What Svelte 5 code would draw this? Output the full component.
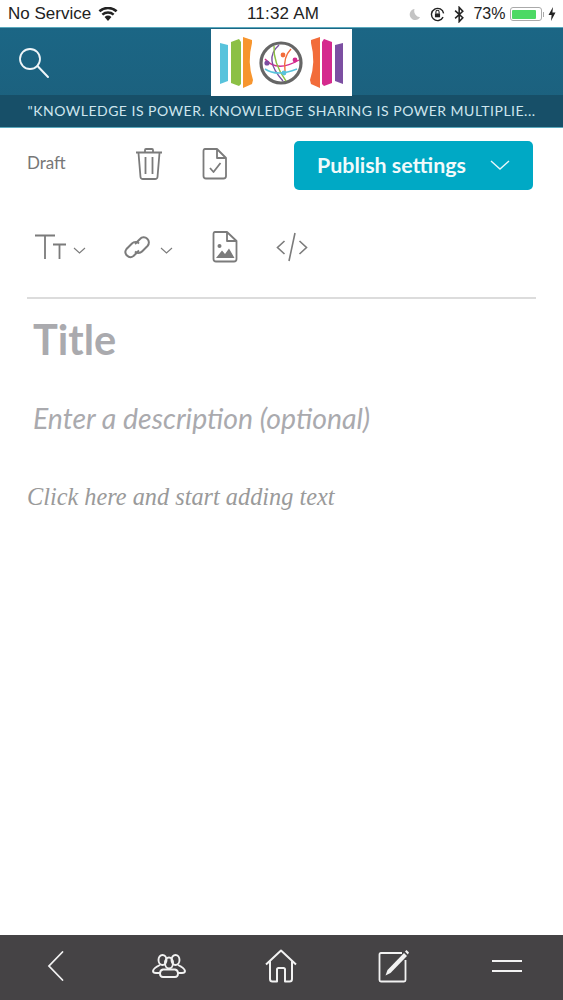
<script>
  const quote = '"KNOWLEDGE IS POWER. KNOWLEDGE SHARING IS POWER MULTIPLIE...';
</script>

<div class="page">
  <div class="status">
    <div class="st-left">
      <span>No Service</span>
      <svg width="20" height="14" viewBox="0 0 18 13"><path d="M9 13 L5.8 9.3 A5 5 0 0 1 12.2 9.3 Z M4.5 7.9 L3 6.2 A9 9 0 0 1 15 6.2 L13.5 7.9 A7 7 0 0 0 4.5 7.9 Z M1.8 4.8 L0.2 3 A13.5 13.5 0 0 1 17.8 3 L16.2 4.8 A11 11 0 0 0 1.8 4.8 Z" fill="#222"/></svg>
    </div>
    <div class="st-time">11:32 AM</div>
    <div class="st-right">
      <svg width="13" height="15" viewBox="0 0 14 14"><path d="M7 1 A6 6 0 1 0 13 10 A7 7 0 0 1 7 1 Z" fill="#c4c4c4"/></svg>
      <svg class="gap-l" width="15" height="15" viewBox="0 0 14 14"><path d="M12.2 9.5 A5.7 5.7 0 1 1 12.7 6" fill="none" stroke="#222" stroke-width="1.3"/><rect x="4.6" y="6" width="4.8" height="3.6" fill="#222"/><path d="M5.5 6 V4.6 A1.5 1.5 0 0 1 8.5 4.6 V6" fill="none" stroke="#222"/></svg>
      <svg class="gap-l" width="11" height="17" viewBox="0 0 10 15"><path d="M1 4 L8 10.5 L4.7 14 V1 L8 4.5 L1 11" fill="none" stroke="#222" stroke-width="1.4"/></svg>
      <span class="pct">73%</span>
      <div class="battery"><div class="fill" style="width: 90%"></div></div>
      <div class="nub"></div>
      <svg class="bolt" width="8" height="14" viewBox="0 0 8 14"><path d="M5 0 L0.5 8 H3.6 L3 14 L7.5 5.6 H4.4 Z" fill="#222"/></svg>
    </div>
  </div>

  <header>
    <div class="top">
      <svg class="search" width="34" height="34" viewBox="0 0 34 34"><circle cx="13" cy="13" r="10" fill="none" stroke="#eef5f8" stroke-width="1.8"/><path d="M20.5 20 L31 31" stroke="#eef5f8" stroke-width="2" stroke-linecap="round"/></svg>
      <div class="logo">
        <svg width="141" height="66" viewBox="0 0 141 66">
          <path d="M9 14 L17 16 V52 L9 55 Z" fill="#58c3dc"/>
          <path d="M20 13 L28 10 L30 13 V55 L28 57 L20 54 Z" fill="#8cc045"/>
          <path d="M32 8 L41 11 L41 14 Q36 33 42 51 L41 55 L32 59 Z" fill="#f7952e"/>
          <circle cx="70" cy="34" r="20" fill="none" stroke="#666" stroke-width="3.2"/>
          <path d="M54 30 Q66 44 88 31" fill="none" stroke="#d52a8e" stroke-width="1.4"/>
          <path d="M68 16 Q52 30 72 52" fill="none" stroke="#7a4fa0" stroke-width="1.4"/>
          <path d="M63 17 Q62 34 75 52" fill="none" stroke="#8cc045" stroke-width="1.4"/>
          <path d="M80 20 Q72 28 74 42" fill="none" stroke="#f26c3a" stroke-width="1.4"/>
          <path d="M54 40 Q66 48 86 40" fill="none" stroke="#58c3dc" stroke-width="1.6"/>
          <circle cx="72" cy="26" r="2.4" fill="#f26c3a"/>
          <circle cx="84" cy="31" r="2.4" fill="#d52a8e"/>
          <circle cx="56" cy="34" r="2.6" fill="#7a4fa0"/>
          <circle cx="73" cy="44" r="2.4" fill="#58c3dc"/>
          <path d="M109 8 L100 11 L100 14 Q105 33 99 51 L100 55 L109 59 Z" fill="#f26c3a"/>
          <path d="M121 13 L113 10 L111 13 V55 L113 57 L121 54 Z" fill="#d52a8e"/>
          <path d="M132 14 L124 16 V52 L132 55 Z" fill="#7c4fa2"/>
        </svg>
      </div>
    </div>
    <div class="quote">{quote}</div>
  </header>

  <main>
    <div class="actions">
      <span class="draft">Draft</span>
      <svg class="trash" width="28" height="34" viewBox="0 0 28 34" fill="none" stroke="#7b7b7b" stroke-width="1.8">
        <path d="M1 5.5 H27 M10 5 V3 Q10 2 11 2 H17 Q18 2 18 3 V5 M3.5 6 L5.5 30 Q5.7 32 8 32 H20 Q22.3 32 22.5 30 L24.5 6 M10.5 10 V27 M17.5 10 V27"/>
      </svg>
      <svg class="check" width="26" height="32" viewBox="0 0 26 32" fill="none" stroke="#7b7b7b" stroke-width="1.8" stroke-linejoin="round">
        <path d="M3 1 H15 L24 10 V28 Q24 30.5 21.5 30.5 H4 Q1.5 30.5 1.5 28 V3 Q1.5 1 3 1 Z M15 1 V10 H24 M8 20 L11.5 24 L18.5 15"/>
      </svg>
      <button class="publish">
        <span>Publish settings</span>
        <svg width="20" height="10" viewBox="0 0 20 10"><path d="M1 1 L10 9 L19 1" fill="none" stroke="#e8f7fa" stroke-width="1.4"/></svg>
      </button>
    </div>

    <div class="tools">
      <div class="tool tt">
        <svg width="32" height="26" viewBox="0 0 32 26" fill="none" stroke="#7b7b7b" stroke-width="1.8">
          <path d="M0 1.5 H20 M10 1.5 V25 M18 10.5 H31 M24.5 10.5 V25"/>
        </svg>
        <svg class="caret" width="13" height="7" viewBox="0 0 13 7"><path d="M1 1 L6.5 6 L12 1" fill="none" stroke="#7b7b7b" stroke-width="1.1"/></svg>
      </div>
      <div class="tool lk">
        <svg width="28" height="27" viewBox="0 0 28 27" fill="none" stroke="#7b7b7b" stroke-width="2">
          <path d="M12 10 L17 5 A5 5 0 0 1 24.5 12 L19 17.5 A5 5 0 0 1 12 17.5"/>
          <path d="M16 16.5 L10.5 22 A5 5 0 0 1 3.5 15 L9 9.5 A5 5 0 0 1 16 9.5"/>
        </svg>
        <svg class="caret" width="13" height="7" viewBox="0 0 13 7"><path d="M1 1 L6.5 6 L12 1" fill="none" stroke="#7b7b7b" stroke-width="1.1"/></svg>
      </div>
      <svg class="img" width="26" height="32" viewBox="0 0 26 32" fill="none" stroke="#7b7b7b" stroke-width="1.8" stroke-linejoin="round">
        <path d="M3 1 H15 L24.5 10 V28 Q24.5 30.5 22 30.5 H4 Q1.5 30.5 1.5 28 V3 Q1.5 1 3 1 Z M15 1 V10 H24.5"/>
        <circle cx="7.5" cy="15" r="2" fill="#7b7b7b" stroke="none"/>
        <path d="M4 27 L10 19.5 L13 23 L17 17.5 L22.5 27 Z" fill="#7b7b7b" stroke="none"/>
      </svg>
      <svg class="code" width="32" height="30" viewBox="0 0 32 30" fill="none" stroke="#7b7b7b" stroke-width="1.6">
        <path d="M8.5 9 L1.5 15.5 L8.5 22 M23.5 9 L30.5 15.5 L23.5 22 M19 1 L13 29"/>
      </svg>
    </div>

    <div class="rule"></div>

    <div class="title">Title</div>
    <div class="desc">Enter a description (optional)</div>
    <div class="body-text">Click here and start adding text</div>
  </main>

  <nav>
    <svg width="18" height="32" viewBox="0 0 18 32"><path d="M15.5 2 L2 16 L15.5 30" fill="none" stroke="#f2f2f2" stroke-width="1.8" stroke-linecap="round"/></svg>
    <svg width="34" height="26" viewBox="0 0 34 26" fill="none" stroke="#f2f2f2" stroke-width="1.9">
      <ellipse cx="10.5" cy="7" rx="4" ry="5"/>
      <ellipse cx="23.5" cy="7" rx="4" ry="5"/>
      <ellipse cx="17" cy="10" rx="4" ry="5.5"/>
      <path d="M8 12 Q1.5 15 1 18 Q1 20 4 20 H8 M26 12 Q32.5 15 33 18 Q33 20 30 20 H26"/>
      <path d="M11 16.5 Q8 17 8 20.5 Q8 24 11 24 H23 Q26 24 26 20.5 Q26 17 23 16.5 Z"/>
    </svg>
    <svg width="32" height="34" viewBox="0 0 32 34" fill="none" stroke="#f2f2f2" stroke-width="2" stroke-linejoin="round">
      <path d="M1 15.5 L16 1.5 L31 15.5 M5 12.5 V30 Q5 32.5 7.5 32.5 H12 V20.5 Q12 19 13.5 19 H18.5 Q20 19 20 20.5 V32.5 H24.5 Q27 32.5 27 30 V12.5"/>
    </svg>
    <svg width="32" height="34" viewBox="0 0 32 34" fill="none" stroke="#f2f2f2" stroke-width="1.8">
      <path d="M24 4 H3 Q1.5 4 1.5 5.5 V31 Q1.5 32.5 3 32.5 H26 Q27.5 32.5 27.5 31 V11"/>
      <path d="M7.5 26.5 L9.5 21 L26 4 L29 7 L12.5 24 Z" fill="#f2f2f2" stroke="none"/>
      <path d="M27 2.5 L28.5 1 L31 3.5 L29.8 5.5 Z" fill="#f2f2f2" stroke="none"/>
    </svg>
    <div class="burger"><i></i><i></i></div>
  </nav>
</div>

<style>
  :global(body) {
    margin: 0;
    background: #fff;
  }
  .page {
    display: flex;
    flex-direction: column;
    height: 1000px;
    width: 563px;
    overflow: hidden;
    font-family: "Lato", sans-serif;
  }
  .status {
    display: flex;
    align-items: center;
    justify-content: space-between;
    height: 27px;
    padding: 1px 7px 0 8px;
    box-sizing: border-box;
    flex: none;
    position: relative;
    font-family: "Liberation Sans", sans-serif;
    font-size: 17px;
    color: #222;
    background: #fff;
  }
  .st-left {
    display: flex;
    align-items: center;
    gap: 7px;
  }
  .st-time {
    position: absolute;
    left: 3px;
    right: 0;
    text-align: center;
    font-size: 17px;
    letter-spacing: 0.2px;
    pointer-events: none;
  }
  .st-right {
    display: flex;
    align-items: center;
  }
  .gap-l {
    margin-left: 9px;
  }
  .pct {
    margin-left: 8px;
    font-size: 16px;
  }
  .battery {
    width: 32px;
    height: 14px;
    margin-left: 4px;
    border: 1px solid #aaa;
    border-radius: 3px;
    padding: 1.5px;
    box-sizing: border-box;
  }
  .fill {
    height: 100%;
    background: #4cd964;
    border-radius: 1px;
  }
  .nub {
    width: 1.5px;
    height: 5px;
    margin-left: 1px;
    background: #aaa;
  }
  .bolt {
    margin-left: 4px;
  }

  header {
    flex: none;
    height: 101px;
    display: flex;
    flex-direction: column;
    border-top: 1px solid #5aa9bd;
    box-sizing: border-box;
    border-bottom: 1px solid #5aa9bd;
    background: linear-gradient(#1b6685, #1c5f7c);
  }
  .top {
    height: 67px;
    flex: none;
    position: relative;
    display: flex;
    align-items: flex-start;
    justify-content: center;
  }
  .search {
    position: absolute;
    left: 17px;
    top: 18px;
  }
  .logo {
    width: 141px;
    height: 67px;
    margin-top: 1px;
    background: #fff;
  }
  .logo svg {
    display: block;
  }
  .quote {
    flex: 1;
    display: flex;
    align-items: center;
    justify-content: center;
    background: #174f68;
    color: #cfe6ee;
    font-size: 14px;
    letter-spacing: 0.5px;
    white-space: nowrap;
    padding-bottom: 1px;
  }

  main {
    flex: 1;
    padding: 0 27px;
    min-height: 0;
  }
  .actions {
    display: flex;
    align-items: center;
    height: 75px;
  }
  .draft {
    width: 108px;
    font-size: 17px;
    color: #777;
    margin-top: -7px;
  }
  .trash {
    margin-top: -4px;
  }
  .check {
    margin-left: 39px;
    margin-top: -4px;
  }
  .publish {
    margin-left: 66px;
    width: 239px;
    height: 49px;
    border: none;
    border-radius: 5px;
    background: #00a9c5;
    color: #f1fafb;
    font-family: "Lato", sans-serif;
    font-size: 21.4px;
    font-weight: 700;
    display: flex;
    align-items: center;
    justify-content: space-between;
    padding: 0 23px 0 23px;
    margin-top: -1px;
  }
  .tools {
    display: flex;
    align-items: center;
    height: 94px;
    padding: 0 0 6px 8px;
    box-sizing: border-box;
  }
  .tool {
    display: flex;
    align-items: center;
  }
  .caret {
    margin-left: 6px;
    margin-top: 7px;
  }
  .lk {
    margin-left: 37px;
  }
  .lk .caret {
    margin-left: 9px;
  }
  .img {
    margin-left: 39px;
  }
  .code {
    margin-left: 38px;
  }
  .rule {
    height: 2px;
    width: 509px;
    background: #dcdcdc;
  }
  .title {
    margin: 15px 0 0 6px;
    font-size: 41.5px;
    line-height: 50px;
    font-weight: 700;
    color: #aaaaae;
  }
  .desc {
    margin: 38px 0 0 6px;
    font-size: 28.4px;
    line-height: 32px;
    font-style: italic;
    color: #aaaaae;
  }
  .body-text {
    margin-top: 48px;
    font-family: "Liberation Serif", serif;
    font-size: 24.3px;
    line-height: 30px;
    font-style: italic;
    color: #9a9a9a;
  }

  nav {
    flex: none;
    height: 65px;
    box-sizing: border-box;
    background: #454345;
    display: grid;
    grid-template-columns: repeat(5, 1fr);
    align-items: center;
    justify-items: center;
    padding-bottom: 3px;
  }
  .burger {
    display: flex;
    flex-direction: column;
    gap: 8px;
    width: 30px;
  }
  .burger i {
    display: block;
    height: 2px;
    background: #f2f2f2;
  }
</style>
